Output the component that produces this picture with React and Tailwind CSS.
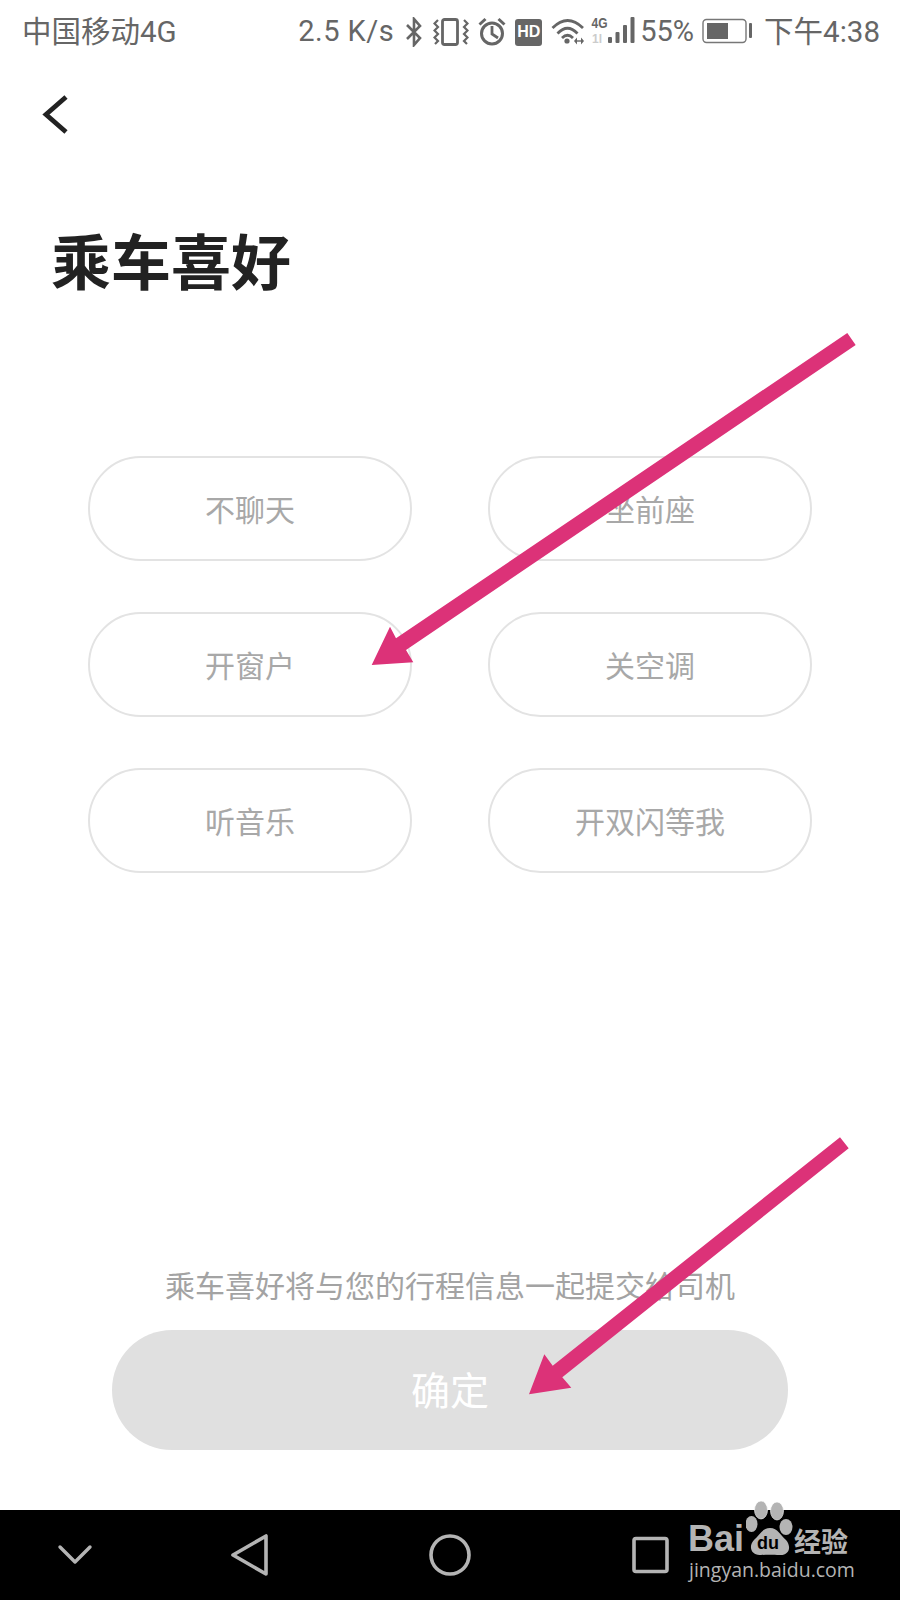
const cjk = { fontFamily: '"Noto Sans CJK SC", "Noto Sans", sans-serif' };
const status = { fontFamily: 'Roboto, "Noto Sans CJK SC", sans-serif' };

function Bluetooth() {
  return (
    <svg width="18" height="30" viewBox="0 0 18 30" fill="none" stroke="#666" strokeWidth="2.6" className="ml-[11px]">
      <path d="M2 8 L15 21 L9 28 V2 L15 9 L2 22" />
    </svg>
  );
}
function Vibrate() {
  return (
    <svg width="36" height="30" viewBox="0 0 36 30" fill="none" stroke="#666" strokeWidth="2.2" className="ml-[10px]">
      <rect x="9.5" y="2.5" width="15" height="25" rx="2" strokeWidth="2.8" />
      <path d="M5 3 L1.5 6.5 L5 10 L1.5 13.5 L5 17 L1.5 20.5 L5 24 L2 27" />
      <path d="M31 3 L34.5 6.5 L31 10 L34.5 13.5 L31 17 L34.5 20.5 L31 24 L34 27" />
    </svg>
  );
}
function Alarm() {
  return (
    <svg width="28" height="30" viewBox="0 0 28 30" fill="none" stroke="#666" className="ml-[9px]">
      <circle cx="14" cy="16.5" r="10.5" strokeWidth="3" />
      <path d="M14 9 V17 L20 21" strokeWidth="2.8" />
      <path d="M1.5 7.5 L7.5 2 M26.5 7.5 L20.5 2" strokeWidth="3" />
    </svg>
  );
}
function Hd() {
  return (
    <div className="ml-[9px] flex h-[27px] w-[27px] items-center justify-center rounded-[3px] bg-[#666] text-[16px] font-bold text-white" style={{ fontFamily: '"Liberation Sans", sans-serif' }}>
      HD
    </div>
  );
}
function Wifi() {
  return (
    <svg width="34" height="30" viewBox="0 0 34 30" fill="none" stroke="#666" strokeWidth="2.8" className="ml-[9px]">
      <path d="M1.5 11 Q16.5 -4 32 11" />
      <path d="M6.5 16.5 Q16.5 6 26.5 16.5" />
      <path d="M11 21 Q16.5 15.5 22 21" />
      <circle cx="16" cy="24" r="2.6" fill="#666" stroke="none" />
      <path d="M23 24 L26 20.5 V27.5 Z M33 24 L30 20.5 V27.5 Z" fill="#666" stroke="none" />
      <path d="M25 24 H31" strokeWidth="1.4" />
    </svg>
  );
}
function Signal() {
  return (
    <svg width="46" height="30" viewBox="0 0 46 30" className="ml-[6px] overflow-visible">
      <text x="0.5" y="11" fontSize="14" fontWeight="700" fill="#666" fontFamily="Liberation Sans, sans-serif" textLength="16" lengthAdjust="spacingAndGlyphs">4G</text>
      <text x="1" y="26" fontSize="12" fontWeight="700" fill="#ccc" fontFamily="Liberation Sans, sans-serif">1l</text>
      <rect x="17" y="20" width="4" height="6" fill="#666" rx="1" />
      <rect x="24.5" y="15" width="4" height="11" fill="#666" rx="1" />
      <rect x="32" y="8" width="4" height="18" fill="#666" rx="1" />
      <rect x="39.5" y="0" width="4" height="26" fill="#666" rx="1" />
    </svg>
  );
}
function Battery() {
  return (
    <svg width="50" height="30" viewBox="0 0 50 30" fill="none" className="ml-[8px]">
      <rect x="1" y="2.5" width="43" height="23" rx="3.5" stroke="#777" strokeWidth="1.4" />
      <rect x="5" y="6" width="21" height="16" fill="#666" />
      <rect x="47" y="6" width="3" height="15" rx="1" fill="#666" />
    </svg>
  );
}

function Pill({ children }) {
  return (
    <div className="flex h-[105px] items-center justify-center rounded-full border-2 border-[#e3e3e3] bg-white text-[30px] text-[#a8a8a8]">
      {children}
    </div>
  );
}

function Watermark() {
  return (
    <div className="absolute left-[688px] top-[1498px] h-[92px] w-[170px] text-[#b4b4b4]">
      <span className="absolute left-0 top-[19px] text-[36px] font-bold leading-[44px]" style={{ fontFamily: '"Liberation Sans", sans-serif' }}>Bai</span>
      <svg width="50" height="62" viewBox="0 0 50 62" className="absolute left-[58px] top-0">
        <ellipse cx="15" cy="12" rx="6.5" ry="9" fill="#b4b4b4" stroke="#fff" strokeWidth="0.6" />
        <ellipse cx="31" cy="13" rx="6.5" ry="9" fill="#b4b4b4" stroke="#fff" strokeWidth="0.6" />
        <ellipse cx="5.5" cy="26" rx="6" ry="8" fill="#b4b4b4" />
        <ellipse cx="40" cy="29" rx="6.5" ry="8" fill="#b4b4b4" />
        <path d="M24 30 C16 30 14 37 8 42 C2 48 5 58 15 57 C20 56.5 28 56.5 33 57 C43 58 46 49 40 42 C34 37 32 30 24 30 Z" fill="#b4b4b4" />
      </svg>
      <span className="absolute left-[69px] top-[34px] text-[18px] font-bold leading-[22px] text-black" style={{ fontFamily: '"Liberation Sans", sans-serif' }}>du</span>
      <span className="absolute left-[106px] top-[28px] text-[27px] font-bold leading-[30px]" style={cjk}>经验</span>
      <span className="absolute left-[1px] top-[59px] text-[19.5px] leading-[26px]" style={{ fontFamily: '"Open Sans", sans-serif' }}>jingyan.baidu.com</span>
    </div>
  );
}

export default function App() {
  return (
    <div className="relative flex h-[1600px] w-[900px] flex-col overflow-hidden bg-white" style={cjk}>
      <div className="flex h-[64px] items-center justify-between pl-[22px] pr-[20px] text-[29.5px] text-[#666]" style={status}>
        <span>中国移动4G</span>
        <div className="flex items-center">
          <span className="text-[29px] tracking-[0.5px]">2.5 K/s</span>
          <Bluetooth />
          <Vibrate />
          <Alarm />
          <Hd />
          <Wifi />
          <Signal />
          <span className="ml-[3px] text-[29px]">55%</span>
          <Battery />
          <span className="ml-[12px]">下午4:38</span>
        </div>
      </div>

      <div className="mt-[30px] pl-[42px]">
        <svg width="28" height="42" viewBox="0 0 28 42" fill="none" stroke="#222" strokeWidth="4.8">
          <path d="M24 3 L4 20.5 L24 38" />
        </svg>
      </div>

      <h1 className="mt-[88px] pl-[51px] text-[60px] font-bold leading-[70px] text-[#222]">乘车喜好</h1>

      <div className="mt-[162px] grid grid-cols-2 gap-x-[76px] gap-y-[51px] pl-[88px] pr-[88px]">
        <Pill>不聊天</Pill>
        <Pill>坐前座</Pill>
        <Pill>开窗户</Pill>
        <Pill>关空调</Pill>
        <Pill>听音乐</Pill>
        <Pill>开双闪等我</Pill>
      </div>

      <div className="flex-1" />

      <p className="text-center text-[30px] leading-[40px] text-[#a3a3a3]">乘车喜好将与您的行程信息一起提交给司机</p>
      <div className="mx-[112px] mt-[26px] flex h-[120px] items-center justify-center rounded-full bg-[#e0e0e0] pb-[3px] text-[39px] text-white">确定</div>
      <div className="h-[60px]" />

      <div className="flex h-[90px] bg-black" />

      <svg width="900" height="90" viewBox="0 1510 900 90" fill="none" stroke="#b4b4b4" className="absolute left-0 top-[1510px]">
        <path d="M60 1547 L75 1562 L90 1547" strokeWidth="3.4" strokeLinecap="round" strokeLinejoin="round" />
        <path d="M266 1536 V1574 L233 1555 Z" strokeWidth="3.6" strokeLinejoin="round" />
        <circle cx="450" cy="1555" r="19" strokeWidth="3.6" />
        <rect x="634" y="1538.5" width="33" height="33" rx="2" strokeWidth="3.6" />
      </svg>

      <Watermark />

      <svg width="900" height="1600" viewBox="0 0 900 1600" className="pointer-events-none absolute left-0 top-0" fill="#dc3278">
        <polygon points="847.3,333 855.7,345 406,650 413.3,662.3 371.7,665 390,626.7 396,638.3" />
        <polygon points="840,1137.3 848.7,1148.3 562.3,1377.3 571.3,1387.7 529,1394.3 544.3,1354.3 552.7,1365.7" />
      </svg>
    </div>
  );
}
